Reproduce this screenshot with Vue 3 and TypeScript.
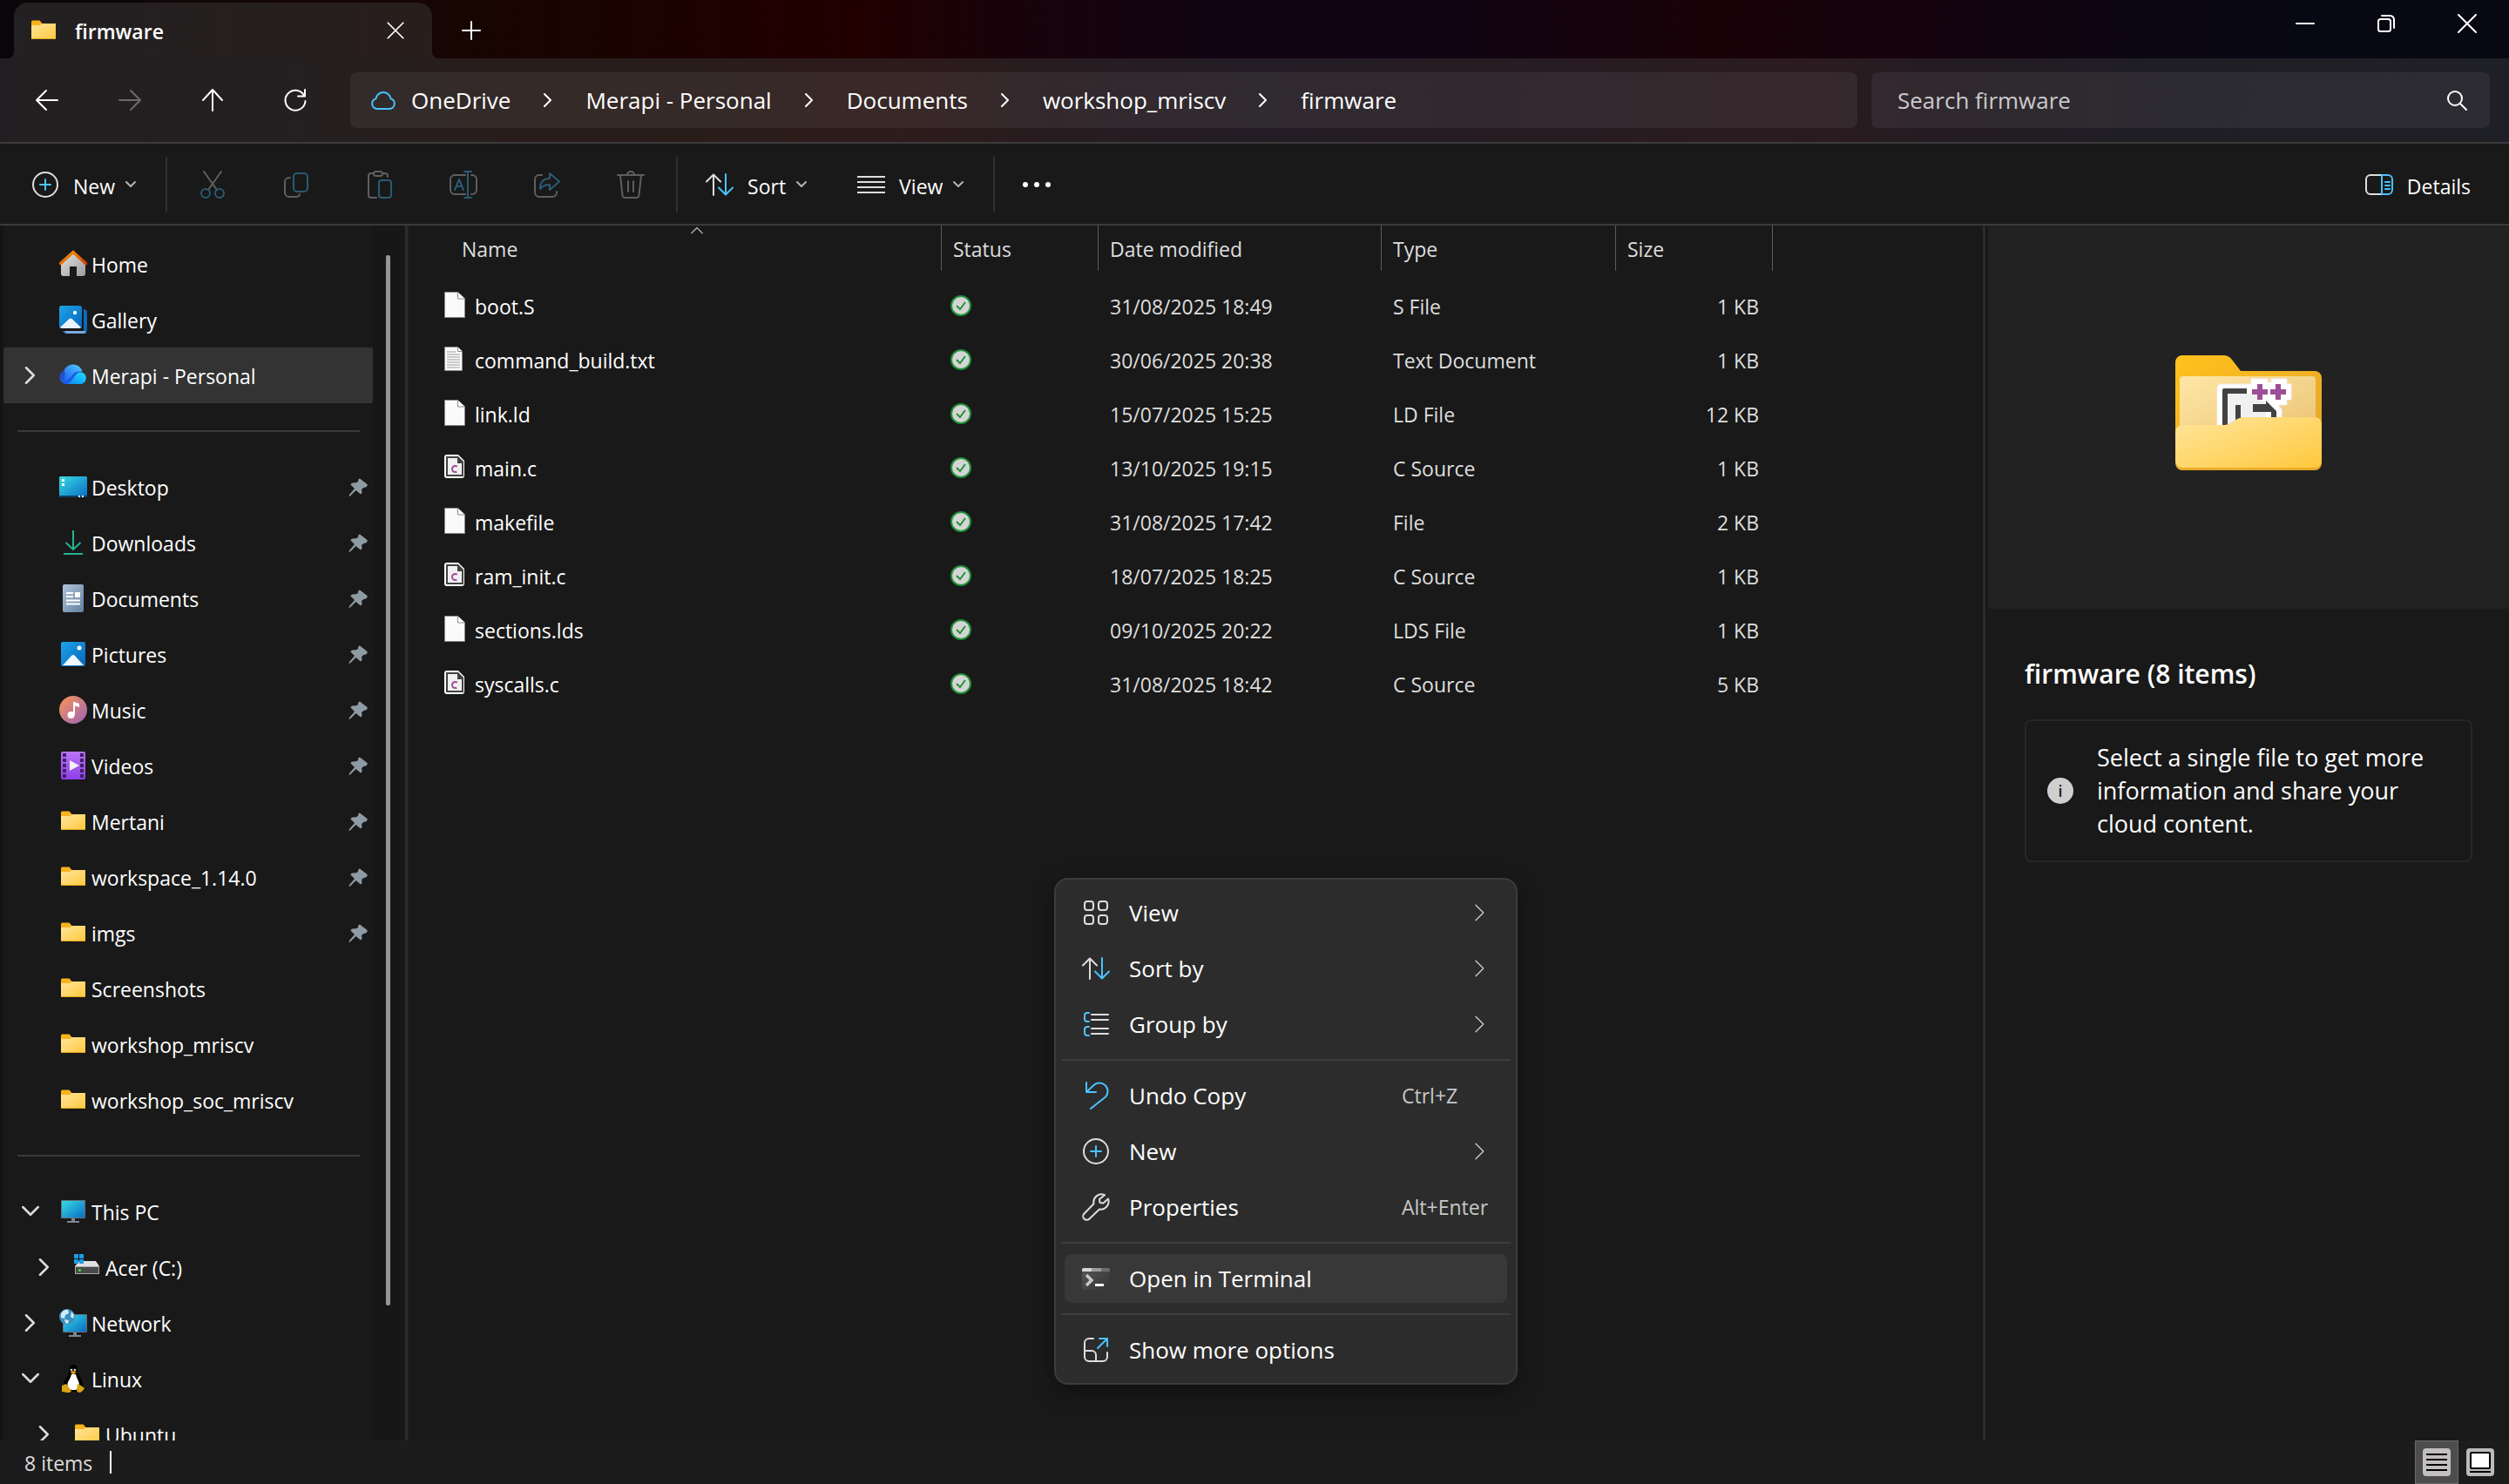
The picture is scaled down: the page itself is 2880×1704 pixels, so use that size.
<script setup lang="ts">
import { ref } from 'vue'

interface TreeItem {
  label: string
  icon: string
  chevron?: 'right' | 'down'
  pinned?: boolean
  nested?: boolean
  selected?: boolean
}

interface FileRow {
  name: string
  icon: string
  modified: string
  type: string
  size: string
}

interface MenuEntry {
  label: string
  icon: string
  submenu?: boolean
  shortcut?: string
  active?: boolean
}

const query = ref('')

const crumbs: string[] = ['OneDrive', 'Merapi - Personal', 'Documents', 'workshop_mriscv', 'firmware']

const navActions = [
  { label: 'Back', icon: 'back', off: false },
  { label: 'Forward', icon: 'forward', off: true },
  { label: 'Up', icon: 'up', off: false },
  { label: 'Refresh', icon: 'refresh', off: false },
]

const editActions = [
  { label: 'Cut', icon: 'cut' },
  { label: 'Copy', icon: 'copy' },
  { label: 'Paste', icon: 'paste' },
  { label: 'Rename', icon: 'rename' },
  { label: 'Share', icon: 'share' },
  { label: 'Delete', icon: 'delete' },
]

const tree: TreeItem[][] = [
  [
    { label: 'Home', icon: 'home' },
    { label: 'Gallery', icon: 'gallery' },
    { label: 'Merapi - Personal', icon: 'onedrive', chevron: 'right', selected: true },
  ],
  [
    { label: 'Desktop', icon: 'desktop', pinned: true },
    { label: 'Downloads', icon: 'downloads', pinned: true },
    { label: 'Documents', icon: 'documents', pinned: true },
    { label: 'Pictures', icon: 'pictures', pinned: true },
    { label: 'Music', icon: 'music', pinned: true },
    { label: 'Videos', icon: 'videos', pinned: true },
    { label: 'Mertani', icon: 'folder', pinned: true },
    { label: 'workspace_1.14.0', icon: 'folder', pinned: true },
    { label: 'imgs', icon: 'folder', pinned: true },
    { label: 'Screenshots', icon: 'folder' },
    { label: 'workshop_mriscv', icon: 'folder' },
    { label: 'workshop_soc_mriscv', icon: 'folder' },
  ],
  [
    { label: 'This PC', icon: 'pc', chevron: 'down' },
    { label: 'Acer (C:)', icon: 'drive', chevron: 'right', nested: true },
    { label: 'Network', icon: 'network', chevron: 'right' },
    { label: 'Linux', icon: 'linux', chevron: 'down' },
    { label: 'Ubuntu', icon: 'folder', chevron: 'right', nested: true },
  ],
]

const columns: string[] = ['Name', 'Status', 'Date modified', 'Type', 'Size']

const files: FileRow[] = [
  { name: 'boot.S', icon: 'file', modified: '31/08/2025 18:49', type: 'S File', size: '1 KB' },
  { name: 'command_build.txt', icon: 'textfile', modified: '30/06/2025 20:38', type: 'Text Document', size: '1 KB' },
  { name: 'link.ld', icon: 'file', modified: '15/07/2025 15:25', type: 'LD File', size: '12 KB' },
  { name: 'main.c', icon: 'cfile', modified: '13/10/2025 19:15', type: 'C Source', size: '1 KB' },
  { name: 'makefile', icon: 'file', modified: '31/08/2025 17:42', type: 'File', size: '2 KB' },
  { name: 'ram_init.c', icon: 'cfile', modified: '18/07/2025 18:25', type: 'C Source', size: '1 KB' },
  { name: 'sections.lds', icon: 'file', modified: '09/10/2025 20:22', type: 'LDS File', size: '1 KB' },
  { name: 'syscalls.c', icon: 'cfile', modified: '31/08/2025 18:42', type: 'C Source', size: '5 KB' },
]

const menu: MenuEntry[][] = [
  [
    { label: 'View', icon: 'grid', submenu: true },
    { label: 'Sort by', icon: 'sort', submenu: true },
    { label: 'Group by', icon: 'group', submenu: true },
  ],
  [
    { label: 'Undo Copy', icon: 'undo', shortcut: 'Ctrl+Z' },
    { label: 'New', icon: 'new', submenu: true },
    { label: 'Properties', icon: 'wrench', shortcut: 'Alt+Enter' },
  ],
  [{ label: 'Open in Terminal', icon: 'terminal', active: true }],
  [{ label: 'Show more options', icon: 'more' }],
]
</script>

<template>
  <svg class="sprite" width="0" height="0" aria-hidden="true">
    <defs>
      <linearGradient id="gFolder" x1="0" y1="0" x2="1" y2="1">
        <stop offset="0" stop-color="#ffe69c" /><stop offset="1" stop-color="#ffc83d" />
      </linearGradient>
      <linearGradient id="gBack" x1="0" y1="0" x2="1" y2="1">
        <stop offset="0" stop-color="#ffc21c" /><stop offset="1" stop-color="#e3a32b" />
      </linearGradient>
      <linearGradient id="gPaper" x1="0" y1="0" x2="1" y2="1">
        <stop offset="0" stop-color="#ffe7a6" /><stop offset="1" stop-color="#e8c071" />
      </linearGradient>
      <linearGradient id="gBlue" x1="0" y1="0" x2="1" y2="1">
        <stop offset="0" stop-color="#1ea3e6" /><stop offset="1" stop-color="#0766bd" />
      </linearGradient>
      <linearGradient id="gScreen" x1="0" y1="0" x2="1" y2="1">
        <stop offset="0" stop-color="#38dbe4" /><stop offset="1" stop-color="#0a6cc4" />
      </linearGradient>
      <linearGradient id="gHouse" x1="0" y1="0" x2="1" y2="1">
        <stop offset="0" stop-color="#e2e2e2" /><stop offset="1" stop-color="#9c9c9c" />
      </linearGradient>
      <linearGradient id="gRoof" x1="0" y1="0" x2="1" y2="1">
        <stop offset="0" stop-color="#fa9a0c" /><stop offset="1" stop-color="#d13f02" />
      </linearGradient>
      <linearGradient id="gMusic" x1="0" y1="0" x2="1" y2="1">
        <stop offset="0" stop-color="#fa9652" /><stop offset="1" stop-color="#9b62b8" />
      </linearGradient>
      <linearGradient id="gVideo" x1="0" y1="0" x2="0" y2="1">
        <stop offset="0" stop-color="#ba75f5" /><stop offset="1" stop-color="#8d3fe6" />
      </linearGradient>
      <linearGradient id="gDoc" x1="0" y1="0" x2="1" y2="1">
        <stop offset="0" stop-color="#b2c5da" /><stop offset="1" stop-color="#61809f" />
      </linearGradient>
      <linearGradient id="gCloudL" x1="0" y1="0" x2="1" y2="1">
        <stop offset="0" stop-color="#1d3fb8" /><stop offset="1" stop-color="#2a70f0" />
      </linearGradient>
      <linearGradient id="gCloudT" x1="0" y1="1" x2="1" y2="0">
        <stop offset="0" stop-color="#1c5df0" /><stop offset="1" stop-color="#52d0ff" />
      </linearGradient>
      <linearGradient id="gCloudR" x1="1" y1="0" x2="0" y2="1">
        <stop offset="0" stop-color="#1fe0fb" /><stop offset="1" stop-color="#0b83f2" />
      </linearGradient>
      <linearGradient id="gTerm" x1="0" y1="0" x2="1" y2="1">
        <stop offset="0" stop-color="#565656" /><stop offset="1" stop-color="#343434" />
      </linearGradient>
    </defs>

    <symbol id="back" viewBox="0 0 32 32"><path d="M28 16H5M15 5L4 16l11 11" class="ln w" /></symbol>
    <symbol id="forward" viewBox="0 0 32 32"><path d="M4 16h23M17 5l11 11-11 11" class="ln f" /></symbol>
    <symbol id="up" viewBox="0 0 32 32"><path d="M16 28V5M5 16L16 4l11 12" class="ln w" /></symbol>
    <symbol id="refresh" viewBox="0 0 32 32"><path d="M26 10.500A11.500 11.500 0 1 0 27.500 17M27 4v7.500h-8" class="ln w" /></symbol>
    <symbol id="close" viewBox="0 0 32 32"><path d="M6 6l20 20M26 6L6 26" class="ln w" /></symbol>
    <symbol id="plus" viewBox="0 0 32 32"><path d="M16 6v20M6 16h20" class="ln w" /></symbol>
    <symbol id="minimize" viewBox="0 0 32 32"><path d="M6 16h20" class="ln w" /></symbol>
    <symbol id="restore" viewBox="0 0 32 32">
      <rect x="7" y="11" width="14" height="14" rx="2.500" class="ln w" />
      <path d="M11 7h9.500a4.500 4.500 0 0 1 4.500 4.500V21" class="ln w" />
    </symbol>
    <symbol id="search" viewBox="0 0 32 32"><circle cx="14" cy="14" r="8" class="ln w" /><path d="M20 20l7 7" class="ln w" /></symbol>
    <symbol id="cloud" viewBox="0 0 32 32">
      <path d="M9 26a6 6 0 0 1-1.400-11.800A8.500 8.500 0 0 1 24.400 14.200 6 6 0 0 1 23 26z" class="ln b" />
    </symbol>
    <symbol id="chevron" viewBox="0 0 16 16"><path d="M4 1l7 7-7 7" class="open" /></symbol>
    <symbol id="caret" viewBox="0 0 16 16"><path d="M3 5l5 5 5-5" class="open" /></symbol>

    <symbol id="new" viewBox="0 0 32 32">
      <circle cx="16" cy="16" r="14" class="ln g" /><path d="M16 10v12M10 16h12" class="ln b" />
    </symbol>
    <symbol id="cut" viewBox="0 0 32 32">
      <path d="M6 1l15 21M26 1L11 22" class="ln d" />
      <circle cx="8" cy="26" r="5" class="ln db" /><circle cx="24" cy="26" r="5" class="ln db" />
    </symbol>
    <symbol id="copy" viewBox="0 0 32 32">
      <path d="M9 8H8a5 5 0 0 0-5 5v12a5 5 0 0 0 5 5h8a4 4 0 0 0 4-3" class="ln d" />
      <rect x="13" y="3" width="16" height="21" rx="4" class="ln db" />
    </symbol>
    <symbol id="paste" viewBox="0 0 32 32">
      <path d="M9 3H6a3 3 0 0 0-3 3v22a3 3 0 0 0 3 3h6M19 3h3a3 3 0 0 1 3 3v1" class="ln d" />
      <rect x="9" y="1" width="10" height="5" rx="2.500" class="ln d" />
      <rect x="15" y="11" width="14" height="20" rx="3" class="ln db" />
    </symbol>
    <symbol id="rename" viewBox="0 0 32 32">
      <path d="M18 5H6a5 5 0 0 0-5 5v12a5 5 0 0 0 5 5h12M25 5h1a5 5 0 0 1 5 5v12a5 5 0 0 1-5 5h-1" class="ln d" />
      <path d="M21 1v30M17 1h8M17 31h8" class="ln db" />
      <polyline points="6,22 11,10 16,22" class="ln db" /><line x1="8" y1="18" x2="14" y2="18" class="ln db" />
    </symbol>
    <symbol id="share" viewBox="0 0 32 32">
      <path d="M10 5H7a5 5 0 0 0-5 5v15a5 5 0 0 0 5 5h15a5 5 0 0 0 5-5v-1" class="ln d" />
      <path d="M8 21c0-8 4-12 11-12V3l11 9.500L19 22v-6c-5 0-8 1.500-11 5z" class="ln db" />
    </symbol>
    <symbol id="delete" viewBox="0 0 32 32">
      <path d="M1 5h30M12 5a4 4 0 0 1 8 0M4 5l2.500 23a3 3 0 0 0 3 3h13a3 3 0 0 0 3-3L28 5M13 12v12M19 12v12" class="ln d" />
    </symbol>
    <symbol id="sort" viewBox="0 0 32 32">
      <path d="M9 28V5M1 12.500L9 4.500l8 8" class="ln g" /><path d="M23 4v23M15 19.500l8 8 8-8" class="ln b" />
    </symbol>
    <symbol id="lines" viewBox="0 0 32 32"><path d="M0 7h32M0 13h32M0 19h32M0 25h32" class="ln g flat" /></symbol>
    <symbol id="dots" viewBox="0 0 32 32">
      <circle cx="3" cy="16" r="3" fill="#fff" /><circle cx="16" cy="16" r="3" fill="#fff" /><circle cx="29" cy="16" r="3" fill="#fff" />
    </symbol>
    <symbol id="panel" viewBox="0 0 32 32">
      <path d="M19 5H6a5 5 0 0 0-5 5v12a5 5 0 0 0 5 5h13" class="ln g" />
      <path d="M19 5h7a5 5 0 0 1 5 5v12a5 5 0 0 1-5 5h-7zM23 13h5M23 17h5M23 21h5" class="ln b" />
    </symbol>

    <symbol id="grid" viewBox="0 0 32 32">
      <rect x="3" y="3" width="10" height="10" rx="3" class="ln g" /><rect x="19" y="3" width="10" height="10" rx="3" class="ln g" />
      <rect x="3" y="19" width="10" height="10" rx="3" class="ln g" /><rect x="19" y="19" width="10" height="10" rx="3" class="ln g" />
    </symbol>
    <symbol id="group" viewBox="0 0 32 32">
      <path d="M8 3H6a3 3 0 0 0-3 3v4a3 3 0 0 0 3 3h2M8 19H6a3 3 0 0 0-3 3v4a3 3 0 0 0 3 3h2" class="ln b" />
      <path d="M11 5h19M11 11h19M11 21h19M11 27h19" class="ln g" />
    </symbol>
    <symbol id="undo" viewBox="0 0 32 32"><path d="M5 1v11h11M5 12l8-7.500a9.500 9.500 0 0 1 14 13L10 31" class="ln b" /></symbol>
    <symbol id="wrench" viewBox="0 0 32 32">
      <path d="M26 2.200a9 9 0 0 0-12.500 10L2.500 23.500a4.200 4.200 0 0 0 6 6L20 18.500A9 9 0 0 0 30 6.500l-5.500 5-4-.500-.500-4z" class="ln g" />
    </symbol>
    <symbol id="terminal" viewBox="0 0 32 32">
      <rect y="4" width="32" height="25" rx="2" fill="url(#gTerm)" />
      <path d="M0 8V6a2 2 0 0 1 2-2h9v4z" fill="#d6d6d6" /><path d="M11 4h11v4H11z" fill="#9b9b9b" /><path d="M22 4h8a2 2 0 0 1 2 2v2H22z" fill="#6e6e6e" />
      <path d="M5 12l6 6-6 6" fill="none" stroke="#c8c8c8" stroke-width="3.500" /><path d="M15 23.500h10" stroke="#fff" stroke-width="3" />
    </symbol>
    <symbol id="more" viewBox="0 0 32 32">
      <path d="M13 3H8a5 5 0 0 0-5 5v16a5 5 0 0 0 5 5h16a5 5 0 0 0 5-5v-5M3 17h8a5 5 0 0 1 5 5v7" class="ln g" />
      <path d="M20 3h9v9M29 3L18 14" class="ln b" />
    </symbol>

    <symbol id="folder" viewBox="0 0 32 32">
      <path d="M2 6a1.500 1.500 0 0 1 1.500-1.500h8L14.500 8H29a1 1 0 0 1 1 1v17H2z" fill="#f9b21a" />
      <path d="M2 10h10l2.500-2H30v16.500a1.500 1.500 0 0 1-1.500 1.500h-25A1.500 1.500 0 0 1 2 24.500z" fill="url(#gFolder)" />
      <path d="M2 25.500h28" stroke="#e5a51e" stroke-width="1" />
    </symbol>
    <symbol id="home" viewBox="0 0 32 32">
      <path d="M2 15L16 3l14 12v12a3 3 0 0 1-3 3h-7V19h-8v11H5a3 3 0 0 1-3-3z" fill="url(#gHouse)" />
      <path d="M1.500 15.500L16 2.500l14.500 13" fill="none" stroke="url(#gRoof)" stroke-width="3.500" stroke-linecap="round" />
    </symbol>
    <symbol id="gallery" viewBox="0 0 32 32">
      <path d="M28 4a4 4 0 0 1 4 4v20a4 4 0 0 1-4 4H8a4 4 0 0 1-4-3h24z" fill="#1267b8" /><path d="M6 29h23l2 2-3 1H8z" fill="#7aa9dc" />
      <rect width="28" height="28" rx="2" fill="#191919" /><rect width="26" height="26" rx="2.500" fill="url(#gBlue)" />
      <path d="M1 25l10-9.500a3 3 0 0 1 4 0L25 25q-1 1-2 1H3q-1 0-2-1z" fill="#eaf4ff" /><circle cx="18" cy="8" r="2.200" fill="#fff" />
    </symbol>
    <symbol id="onedrive" viewBox="0 0 32 32">
      <path d="M8 26A8 8 0 0 1 5.500 10.500 11 11 0 0 1 26 12L12 26z" fill="url(#gCloudL)" />
      <path d="M3 22C8 22 11 17 14 13c3-4 7-5 12-1C19 12 17 17 14 21c-2 3-4 5-7 5-2 0-3-2-4-4z" fill="#1b5ce8" />
      <path d="M5.500 10.500A11 11 0 0 1 26.500 12C20 10.500 17 13 14 17 11 21 8 22.500 4 22 8 17 7 14 5.500 10.500z" fill="url(#gCloudT)" />
      <path d="M8 26c5-1 7-5 9-8 3-5 7-7 11-4.500A7 7 0 0 1 25 26z" fill="url(#gCloudR)" />
    </symbol>
    <symbol id="desktop" viewBox="0 0 32 32">
      <rect y="4" width="32" height="24" rx="1.500" fill="url(#gScreen)" /><path d="M0 26h32a2 2 0 0 1-2 2H2a2 2 0 0 1-2-2z" fill="#0c3e66" />
      <path d="M3 7h3v3H3zM3 12h3v3H3zM22 26h2v2h-2zM26 26h2v2h-2z" fill="#fff" />
    </symbol>
    <symbol id="downloads" viewBox="0 0 32 32">
      <path d="M16 2v22M7.500 16l8.500 8 8.500-8M5 29h22" fill="none" stroke="#22b58f" stroke-width="2" />
    </symbol>
    <symbol id="documents" viewBox="0 0 32 32">
      <rect x="4" width="24" height="32" rx="2" fill="url(#gDoc)" />
      <path d="M8 9h8v2H8zM8 13h8v2H8zM18 9h6v6h-6zM8 17.500h16v2H8zM8 21.500h16v2H8z" fill="#fff" />
    </symbol>
    <symbol id="pictures" viewBox="0 0 32 32">
      <rect x="2" y="2" width="28" height="28" rx="2" fill="url(#gBlue)" />
      <path d="M4 29l10-11a3 3 0 0 1 4 0l10 11z" fill="#eff7ff" /><circle cx="23" cy="9" r="2.500" fill="#fff" />
    </symbol>
    <symbol id="music" viewBox="0 0 32 32">
      <circle cx="16" cy="16" r="16" fill="url(#gMusic)" /><circle cx="13.500" cy="22" r="4" fill="#fff" />
      <path d="M16 22V6.500l7 2.500v4l-5-1.500V22z" fill="#fff" />
    </symbol>
    <symbol id="videos" viewBox="0 0 32 32">
      <rect x="2" width="28" height="32" rx="2" fill="url(#gVideo)" />
      <path d="M6 2v29M26 2v29" stroke="#42206e" stroke-width="4" stroke-dasharray="4 2" /><path d="M12 10l11 6-11 6z" fill="#f5f0fb" />
    </symbol>
    <symbol id="pc" viewBox="0 0 32 32">
      <path d="M14 24h4v3h5v2H9v-2h5z" fill="#7a8793" /><rect x="2" y="3" width="28" height="21" rx="1" fill="#62727f" />
      <rect x="3" y="4" width="26" height="19" fill="url(#gScreen)" />
    </symbol>
    <symbol id="drive" viewBox="0 0 32 32">
      <path d="M7 9h19l4 6H2z" fill="#dfe1e4" /><rect x="2" y="15" width="28" height="9" fill="#a8a8a8" /><rect x="3" y="16" width="26" height="7" fill="#4a4a4a" />
      <circle cx="7.500" cy="19.500" r="1.500" fill="#3bef2b" />
      <path d="M1 1h5v5H1zM7 1h5v5H7zM1 7h5v5H1zM7 7h5v5H7z" fill="#1b9de8" />
    </symbol>
    <symbol id="network" viewBox="0 0 32 32">
      <path d="M16 27h4v3h5v2H11v-2h5z" fill="#7a8793" /><rect x="4" y="6" width="28" height="21" rx="1" fill="#62727f" />
      <rect x="5" y="7" width="26" height="19" fill="url(#gScreen)" /><circle cx="9" cy="9" r="9" fill="#3c8fbf" />
      <path d="M2 5q4-5 8-4l1 4-4 2-1 4-4-1zM14 3l3 4-1 4-3-2zM6 12l5 1-1 4-3-1z" fill="#cfeaf5" />
    </symbol>
    <symbol id="linux" viewBox="0 0 32 32">
      <path d="M11 8c0-5 2-8 5.500-8S21 3 21 8c0 4 6 8 6 16 0 5-4 7-10 7S5 29 5 24c0-7 6-11 6-16z" fill="#000" />
      <path d="M14 11h5c1 5 4 8 4 12 0 4-2 6-6.500 6S9.500 27 9.500 23c0-4 3.500-7 4.500-12z" fill="#fff" />
      <circle cx="14" cy="6" r="1.300" fill="#ddd" /><circle cx="18" cy="6" r="1.300" fill="#ddd" />
      <path d="M12.500 8.500L16 7l4 1.500-4 3zM3 24l5-2 6 8q-2 3-5 2l-6-1zM21 22l4 2 4 3q-2 4-5 5-4 0-4-3z" fill="#d9a313" />
    </symbol>
    <symbol id="pin" viewBox="0 0 24 24">
      <path d="M14 2.500l8.500 6.500c.700 2.500-1 3.500-4 4L16 15c1 3 .500 5-1 5.500L9.500 16 3 22.500l-1.500.500.500-2L8 14 3.500 9.500C4 8 6 7 9 7.500L12 6c0-2.500.800-3.500 2-3.500z" fill="#8f9ba3" />
    </symbol>

    <symbol id="file" viewBox="0 0 24 32"><path d="M.500.500h15l8 7.500v21.500H.500z" fill="#fafafa" stroke="#8a8a8a" /><path d="M15.500.500V8h8" fill="#fff" stroke="#8a8a8a" /></symbol>
    <symbol id="textfile" viewBox="0 0 24 32">
      <path d="M.500 1.500h15l5 5v22H.500z" fill="#fafafa" stroke="#8a8a8a" /><path d="M15.500 1.500v5h5" fill="#fff" stroke="#8a8a8a" />
      <path d="M3 7h10M3 10h15M3 13h15M3 16h15M3 19h15M3 22h15M3 25h15" stroke="#9b9b9b" />
    </symbol>
    <symbol id="cfile" viewBox="0 0 24 32">
      <path d="M3 1h13l7 7v17a3 3 0 0 1-3 3H3a3 3 0 0 1-3-3V4a3 3 0 0 1 3-3z" fill="#fff" /><path d="M2 3h14l6 6v17H2z" fill="#424242" />
      <path d="M4 5h11v6h5v13H4z" fill="#f0eff1" />
      <circle cx="12.500" cy="17.500" r="3.500" fill="none" stroke="#9b4f96" stroke-width="2" stroke-dasharray="15 7" stroke-dashoffset="-3.500" />
    </symbol>
    <symbol id="synced" viewBox="0 0 24 24">
      <circle cx="12" cy="12" r="11" fill="#d5d5d5" stroke="#1f9237" stroke-width="2" /><path d="M7 12l4 4 6-8" fill="none" stroke="#1f9237" stroke-width="2" />
    </symbol>
    <symbol id="listview" viewBox="0 0 32 32"><rect width="32" height="32" rx="4" fill="#c3bfc1" /><path d="M4 7h24M4 13h24M4 19h24M4 25h24" stroke="#000" stroke-width="2" /></symbol>
    <symbol id="tileview" viewBox="0 0 32 32">
      <rect width="32" height="32" rx="4" fill="#bdbabc" /><rect x="5" y="5" width="22" height="18" rx="1" fill="#fff" stroke="#000" stroke-width="2" /><path d="M4 27h24" stroke="#000" stroke-width="2" />
    </symbol>
  </svg>

  <div class="window">
    <header class="titlebar">
      <div class="tab">
        <svg class="ic"><use href="#folder" /></svg>
        <span class="tab-name">firmware</span>
        <button type="button" class="plain" aria-label="Close tab"><svg class="ic28"><use href="#close" /></svg></button>
      </div>
      <button type="button" class="plain add" aria-label="New tab"><svg class="ic"><use href="#plus" /></svg></button>
      <div class="controls">
        <button type="button" class="plain" aria-label="Minimize"><svg class="ic"><use href="#minimize" /></svg></button>
        <button type="button" class="plain" aria-label="Restore"><svg class="ic"><use href="#restore" /></svg></button>
        <button type="button" class="plain" aria-label="Close"><svg class="ic"><use href="#close" /></svg></button>
      </div>
    </header>

    <nav class="navbar">
      <div class="nav-actions">
        <button v-for="a in navActions" :key="a.icon" type="button" class="plain" :aria-label="a.label" :disabled="a.off">
          <svg class="ic"><use :href="'#' + a.icon" /></svg>
        </button>
      </div>
      <div class="address">
        <svg class="ic"><use href="#cloud" /></svg>
        <template v-for="(c, i) in crumbs" :key="c">
          <svg v-if="i > 0" class="ic16 crumb-sep"><use href="#chevron" /></svg>
          <a href="#" class="crumb">{{ c }}</a>
        </template>
      </div>
      <div class="search">
        <input v-model="query" type="text" placeholder="Search firmware" aria-label="Search firmware" />
        <svg class="ic"><use href="#search" /></svg>
      </div>
    </nav>

    <div class="toolbar">
      <button type="button" class="plain tool new-tool">
        <svg class="ic"><use href="#new" /></svg><span>New</span><svg class="ic16 drop"><use href="#caret" /></svg>
      </button>
      <span class="bar"></span>
      <div class="edit">
        <button v-for="a in editActions" :key="a.icon" type="button" class="plain" :aria-label="a.label" disabled>
          <svg class="ic"><use :href="'#' + a.icon" /></svg>
        </button>
      </div>
      <span class="bar"></span>
      <button type="button" class="plain tool sort-tool">
        <svg class="ic"><use href="#sort" /></svg><span>Sort</span><svg class="ic16 drop"><use href="#caret" /></svg>
      </button>
      <button type="button" class="plain tool view-tool">
        <svg class="ic"><use href="#lines" /></svg><span>View</span><svg class="ic16 drop"><use href="#caret" /></svg>
      </button>
      <span class="bar"></span>
      <button type="button" class="plain tool more-tool" aria-label="See more"><svg class="ic"><use href="#dots" /></svg></button>
      <button type="button" class="plain tool details-tool">
        <svg class="ic"><use href="#panel" /></svg><span>Details</span>
      </button>
    </div>

    <main class="body">
      <aside class="sidebar">
        <div class="tree">
          <ul v-for="(group, gi) in tree" :key="gi" class="tree-group">
            <li v-for="item in group" :key="item.label">
              <a href="#" class="node" :class="{ selected: item.selected, nested: item.nested }">
                <span class="twist">
                  <svg v-if="item.chevron" class="ic20" :class="item.chevron"><use href="#chevron" /></svg>
                </span>
                <svg class="ic"><use :href="'#' + item.icon" /></svg>
                <span class="node-name">{{ item.label }}</span>
                <svg v-if="item.pinned" class="pin"><use href="#pin" /></svg>
              </a>
            </li>
          </ul>
        </div>
        <span class="thumb"></span>
      </aside>

      <section class="files">
        <table>
          <colgroup>
            <col class="c-name" /><col class="c-status" /><col class="c-date" /><col class="c-type" /><col class="c-size" />
          </colgroup>
          <thead>
            <tr>
              <th v-for="(c, i) in columns" :key="c" scope="col">
                <button type="button" class="head">{{ c }}</button>
                <svg v-if="i === 0" class="ic20 sorted"><use href="#caret" /></svg>
              </th>
            </tr>
          </thead>
          <tbody>
            <tr v-for="f in files" :key="f.name">
              <td class="name"><div class="name-cell"><svg class="doc"><use :href="'#' + f.icon" /></svg><span>{{ f.name }}</span></div></td>
              <td class="status"><svg class="ic24"><use href="#synced" /></svg></td>
              <td>{{ f.modified }}</td>
              <td>{{ f.type }}</td>
              <td class="size">{{ f.size }}</td>
            </tr>
          </tbody>
        </table>
      </section>

      <aside class="details">
        <div class="preview">
          <svg class="big-folder" viewBox="0 0 168 132" aria-hidden="true">
            <path d="M0 8a8 8 0 0 1 8-8h46c5 0 8 1 11 5l10 13h85a8 8 0 0 1 8 8v90H0z" fill="url(#gBack)" />
            <rect x="5" y="24" width="156" height="80" rx="4" fill="url(#gPaper)" />
            <path d="M48 85V38q0-5 5-5h34v-6h19v4h4v-4h18v6h5v18h-5v6h-10l4 5v25z" fill="#fff" stroke="#f0eff1" />
            <path d="M54 85V40q0-2 2-2h26v6H60v41z" fill="#424242" />
            <path d="M60 85V44h30l14 12v29z" fill="#f0eff1" />
            <path d="M69 57h6v18h-6zM89 56h15v-4l12 12v12h-6V65H89z" fill="#424242" />
            <path d="M77 76q7-8 14-3v6H77z" fill="#424242" />
            <path d="M94 33h6v6h6v6h-6v6h-6v-6h-6v-6h6zM115 33h6v6h6v6h-6v6h-6v-6h-6v-6h6z" fill="#9b4f96" />
            <path d="M0 88a8 8 0 0 1 8-8h49c10 0 12-9 22-9h81a8 8 0 0 1 8 8v45a8 8 0 0 1-8 8H8a8 8 0 0 1-8-8z" fill="#e9ab2a" />
            <path d="M0 88a8 8 0 0 1 8-8h49c10 0 12-9 22-9h81a8 8 0 0 1 8 8v42a8 8 0 0 1-8 8H8a8 8 0 0 1-8-8z" fill="url(#gFolder)" />
          </svg>
        </div>
        <h1>firmware (8 items)</h1>
        <div class="tip">
          <span class="info" aria-hidden="true">i</span>
          <p>Select a single file to get more information and share your cloud content.</p>
        </div>
      </aside>
    </main>

    <footer class="statusbar">
      <span class="count">8 items</span>
      <span class="cursor"></span>
      <div class="views">
        <button type="button" class="plain on" aria-label="Details view"><svg class="ic"><use href="#listview" /></svg></button>
        <button type="button" class="plain" aria-label="Large icons view"><svg class="ic"><use href="#tileview" /></svg></button>
      </div>
    </footer>

    <div class="menu" role="menu">
      <div v-for="(group, gi) in menu" :key="gi" class="menu-group">
        <button v-for="m in group" :key="m.label" type="button" role="menuitem" class="menu-item" :class="{ active: m.active }">
          <svg class="ic"><use :href="'#' + m.icon" /></svg>
          <span class="menu-label">{{ m.label }}</span>
          <span v-if="m.shortcut" class="shortcut">{{ m.shortcut }}</span>
          <svg v-if="m.submenu" class="ic20 sub"><use href="#chevron" /></svg>
        </button>
      </div>
    </div>
  </div>
</template>

<style>
body {
  background: #191919;
}
</style>

<style scoped>
* {
  box-sizing: border-box;
}
.sprite {
  position: absolute;
}
.window {
  position: relative;
  display: flex;
  flex-direction: column;
  height: 100vh;
  overflow: hidden;
  background: #191919;
  color: #fff;
  font-family: 'Open Sans', 'Noto Sans', sans-serif;
  font-size: 23px;
  line-height: 32px;
}
button,
input {
  font: inherit;
  color: inherit;
}
a {
  color: inherit;
  text-decoration: none;
}
.plain {
  display: flex;
  align-items: center;
  justify-content: center;
  padding: 0;
  border: 0;
  background: none;
}
svg {
  flex: none;
  display: block;
}
.ic { width: 32px; height: 32px; }
.ic28 { width: 28px; height: 28px; }
.ic24 { width: 24px; height: 24px; }
.ic20 { width: 20px; height: 20px; stroke-width: 2; }
.ic16 { width: 16px; height: 16px; stroke-width: 2; }

.ln { fill: none; stroke-width: 2; stroke-linecap: round; stroke-linejoin: round; }
.open { fill: none; stroke: currentColor; stroke-linecap: round; stroke-linejoin: round; }
.w { stroke: #fff; }
.g { stroke: #dedede; }
.f { stroke: #6e6a6a; }
.b { stroke: #4cc2ff; }
.d { stroke: #5f5f5f; }
.db { stroke: #2a5a74; }
.flat { stroke-linecap: butt; }

/* Title bar */
.titlebar {
  display: flex;
  flex: none;
  height: 67px;
  padding: 3px 0 0 16px;
  background: linear-gradient(90deg, #08060a 0%, #120606 10%, #190500 22%, #1e0200 29%, #220000 34%, #18030a 40%, #120412 48%, #120412 58%, #180308 68%, #16020c 75%, #0e0612 83%, #080814 91%, #070811 100%);
}
.tab {
  position: relative;
  display: flex;
  align-items: center;
  width: 480px;
  padding: 0 28px 0 18px;
  border-radius: 16px 16px 0 0;
  background: linear-gradient(90deg, #222022, #281e1c);
}
.tab::before,
.tab::after {
  content: '';
  position: absolute;
  bottom: 0;
  width: 8px;
  height: 8px;
}
.tab::before {
  left: -8px;
  background: radial-gradient(circle at 0 0, transparent 8px, #222022 8px);
}
.tab::after {
  right: -8px;
  background: radial-gradient(circle at 100% 0, transparent 8px, #281e1c 8px);
}
.tab-name {
  flex: 1;
  padding: 2px 0 0 20px;
  font-weight: 600;
}
.add {
  width: 90px;
}
.controls {
  display: flex;
  height: 48px;
  margin-left: auto;
  padding-right: 2px;
}
.controls .plain {
  width: 93px;
}

/* Navigation bar */
.navbar {
  display: flex;
  flex: none;
  align-items: center;
  gap: 16px;
  height: 98px;
  padding: 0 22px 0 6px;
  border-bottom: 2px solid #3c3a3b;
  background: linear-gradient(90deg, #221f22 0%, #241f20 12%, #281d1b 20%, #291d1a 28%, #2e1b1b 36%, #271c20 42%, #241d25 50%, #261c22 60%, #2b1b20 72%, #231c22 78%, #201e25 85%, #1f1f26 100%);
  font-size: 26px;
}
.nav-actions {
  display: flex;
  width: 380px;
}
.nav-actions .plain {
  width: 96px;
}
.address {
  display: flex;
  flex: 1;
  align-items: center;
  height: 64px;
  padding: 0 22px;
  border-radius: 8px;
  background: rgba(255, 255, 255, 0.06);
}
.crumb {
  padding-left: 16px;
}
.crumb-sep {
  margin: 0 19px 0 35px;
}
.search {
  display: flex;
  flex: none;
  align-items: center;
  width: 710px;
  height: 64px;
  padding: 0 22px 0 30px;
  border-radius: 8px;
  background: rgba(255, 255, 255, 0.06);
}
.search input {
  flex: 1;
  min-width: 0;
  padding: 0;
  border: 0;
  outline: 0;
  background: none;
}
.search input::placeholder {
  color: #cbc9cb;
  opacity: 1;
}

/* Command bar */
.toolbar {
  display: flex;
  flex: none;
  align-items: center;
  height: 94px;
  padding: 2px 44px 0 36px;
  border-bottom: 2px solid #3a3a3a;
}
.bar {
  width: 2px;
  height: 64px;
  background: #303030;
}
.tool span {
  padding: 4px 10px 0 16px;
}
.drop {
  color: #b4b4b4;
}
.new-tool { margin-right: 32px; }
.edit {
  display: flex;
  width: 584px;
  padding: 0 4px;
}
.edit .plain {
  width: 96px;
}
.sort-tool { margin: 0 56px 0 32px; }
.view-tool { margin-right: 32px; }
.more-tool { margin-left: 32px; }
.details-tool { margin-left: auto; }
.details-tool span { padding-right: 0; }

/* Body */
.body {
  display: flex;
  flex: 1;
  min-height: 0;
}
.sidebar {
  position: relative;
  flex: none;
  width: 468px;
  border-left: 4px solid #141414;
  border-right: 3px solid #2b2b2b;
  overflow: hidden;
  background: #171717;
}
.tree {
  width: 424px;
  padding-top: 12px;
  background: #191919;
}
.tree-group {
  margin: 0;
  padding: 0;
  list-style: none;
}
.tree-group + .tree-group::before {
  content: '';
  display: block;
  height: 2px;
  margin: 31px 15px 31px 16px;
  background: #3a3a3a;
}
.node {
  display: flex;
  align-items: center;
  height: 64px;
  padding-right: 5px;
}
.node.nested {
  padding-left: 16px;
}
.node.selected {
  border-radius: 2px;
  background: #333;
}
.twist {
  width: 64px;
  padding-left: 21px;
  color: #dcdcdc;
}
.down {
  transform: rotate(90deg);
}
.node-name {
  flex: 1;
  padding: 2px 0 0 5px;
}
.pin {
  width: 24px;
  height: 24px;
}
.thumb {
  position: absolute;
  top: 34px;
  bottom: 155px;
  left: 439px;
  width: 5px;
  border-radius: 2px;
  background: #969696;
}

/* File list */
.files {
  flex: 1;
  min-width: 0;
  padding-left: 40px;
  border-left: 2px solid #1f1f1f;
}
table {
  width: 1525px;
  border-collapse: collapse;
  table-layout: fixed;
}
.c-name { width: 571px; }
.c-status { width: 180px; }
.c-date { width: 325px; }
.c-type { width: 269px; }
.c-size { width: 180px; }
th {
  position: relative;
  height: 61px;
  padding: 0;
  font-weight: 400;
  vertical-align: top;
}
.head {
  display: block;
  width: 100%;
  height: 52px;
  padding: 2px 0 0 13px;
  border: 0;
  border-right: 1px solid #5c5c5c;
  background: none;
  color: #dedede;
  text-align: left;
}
th:first-child .head {
  padding-left: 20px;
}
.sorted {
  position: absolute;
  top: -5px;
  left: 49%;
  color: #b0b0b0;
  stroke-width: 1;
  transform: rotate(180deg);
}
td {
  height: 62px;
  padding: 2px 0 0 13px;
  color: #dedede;
}
.name {
  padding: 0;
  color: #fff;
}
.name-cell {
  display: flex;
  align-items: center;
  gap: 11px;
}
.name-cell span {
  padding-top: 2px;
}
.doc {
  width: 24px;
  height: 32px;
}
.status {
  padding: 0 0 0 10px;
}
.size {
  padding-right: 16px;
  text-align: right;
}

/* Details pane */
.details {
  flex: none;
  width: 604px;
  border-left: 3px solid #2b2b2b;
}
.preview {
  display: flex;
  align-items: center;
  justify-content: center;
  height: 440px;
  margin-left: 3px;
  padding-bottom: 10px;
  background: #222;
}
.big-folder {
  width: 168px;
  height: 132px;
}
h1 {
  margin: 54px 44px 32px 45px;
  font-size: 30px;
  line-height: 41px;
  font-weight: 600;
}
.tip {
  display: flex;
  align-items: center;
  gap: 27px;
  margin: 0 42px 0 45px;
  padding: 23px 24px;
  border: 2px solid #272727;
  border-radius: 8px;
  font-size: 27px;
  line-height: 38px;
}
.tip p {
  flex: 1;
  margin: 0;
}
.info {
  width: 30px;
  height: 30px;
  border-radius: 15px;
  background: #cfcfcf;
  color: #191919;
  font-size: 18px;
  font-weight: 600;
  line-height: 30px;
  text-align: center;
}

/* Status bar */
.statusbar {
  display: flex;
  flex: none;
  align-items: center;
  height: 50px;
  padding: 0 8px 0 28px;
  background: #1c1c1c;
  color: #dedede;
}
.count {
  padding-top: 2px;
}
.cursor {
  width: 2px;
  height: 26px;
  margin-left: 20px;
  background: #fff;
}
.views {
  display: flex;
  margin-left: auto;
}
.views .plain {
  width: 50px;
  height: 50px;
}
.views .on {
  border: 1px solid #6a6a6a;
  background: #4d4d4d;
}

/* Context menu */
.menu {
  position: absolute;
  top: 1008px;
  left: 1210px;
  width: 532px;
  padding: 6px;
  border: 2px solid #3c3c3c;
  border-radius: 16px;
  background: #2c2c2c;
  box-shadow: 0 8px 24px rgba(0, 0, 0, 0.35);
  font-size: 26px;
}
.menu-group {
  display: flex;
  flex-direction: column;
}
.menu-group + .menu-group::before {
  content: '';
  height: 2px;
  margin: 8px 0;
  background: #3d3d3d;
}
.menu-item {
  display: flex;
  align-items: center;
  height: 56px;
  margin: 4px;
  padding: 0 0 0 20px;
  border: 0;
  border-radius: 8px;
  background: none;
  text-align: left;
}
.menu-item.active {
  background: #383838;
}
.menu-label {
  flex: 1;
  padding-left: 22px;
}
.shortcut {
  width: 121px;
  color: #c8c8c8;
  font-size: 23px;
}
.sub {
  margin-right: 21px;
  color: #cfcfcf;
  stroke-width: 1;
}
</style>
